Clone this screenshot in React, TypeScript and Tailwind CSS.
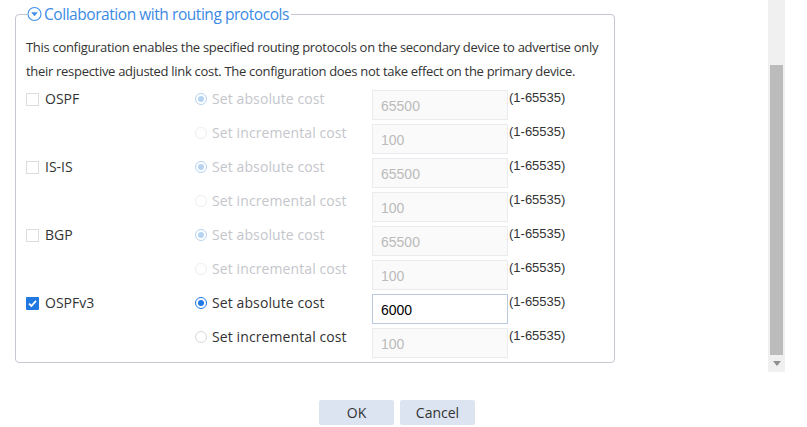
import React from "react";

const font = { fontFamily: '"Open Sans", "Noto Sans", Arial, sans-serif' };

function Radio({ checked, disabled }: { checked: boolean; disabled: boolean }) {
  if (checked) {
    const c = disabled ? "#b5d3f3" : "#1f7ae6";
    return (
      <span
        className="mt-[3px] mr-[5px] flex h-[12px] w-[12px] shrink-0 items-center justify-center rounded-full border bg-white"
        style={{ borderColor: c }}
      >
        <span className="h-[6px] w-[6px] rounded-full" style={{ background: c }} />
      </span>
    );
  }
  return (
    <span
      className={
        "mt-[3px] mr-[5px] h-[12px] w-[12px] shrink-0 rounded-full border bg-white " +
        (disabled ? "border-[#eeeeee]" : "border-[#d9d9d9]")
      }
    />
  );
}

function Checkbox({ checked }: { checked: boolean }) {
  if (checked) {
    return (
      <span className="mt-[3px] mr-[6px] flex h-[13px] w-[13px] shrink-0 items-center justify-center rounded-[1px] bg-[#2078e0]">
        <svg width="11" height="11" viewBox="0 0 11 11">
          <path d="M2 5.6 L4.4 8 L9 2.8" fill="none" stroke="#fff" strokeWidth="1.8" />
        </svg>
      </span>
    );
  }
  return <span className="mt-[3px] mr-[6px] h-[13px] w-[13px] shrink-0 border border-[#dcdcdc] bg-white" />;
}

function SubRow({
  first,
  label,
  checked,
  disabled,
  value,
  active,
  proto,
  protoChecked,
}: {
  first: boolean;
  label: string;
  checked: boolean;
  disabled: boolean;
  value: string;
  active: boolean;
  proto?: string;
  protoChecked?: boolean;
}) {
  return (
    <div className="flex h-[34px] items-start">
      <div className="flex w-[169px] items-start">
        {first && (
          <>
            <Checkbox checked={!!protoChecked} />
            <span className="text-[14px] leading-[18px] text-[#333]" style={font}>
              {proto}
            </span>
          </>
        )}
      </div>
      <div className="flex w-[177px] items-start">
        <Radio checked={checked} disabled={disabled} />
        <span
          className={
            "whitespace-nowrap text-[14px] leading-[18px] tracking-[0.1px] " +
            (disabled ? "text-[#c4c6cc]" : "text-[#333]")
          }
          style={font}
        >
          {label}
        </span>
      </div>
      <div
        className={
          "flex h-[30px] w-[136px] items-center border pl-[8px] text-[14px] " +
          (active
            ? "border-[#b9c9dd] bg-white text-black"
            : "border-[#ebebef] bg-[#fafafa] text-[#bbbbbb]")
        }
        style={{ fontFamily: '"Liberation Sans", Arial, sans-serif' }}
      >
        <span className="mt-[2px]">{value}</span>
      </div>
      <span
        className="ml-[1px] text-[13px] leading-[16px] text-[#333]"
        style={{ fontFamily: '"Liberation Sans", Arial, sans-serif' }}
      >
        (1-65535)
      </span>
    </div>
  );
}

const protos = [
  { name: "OSPF", checked: false, abs: "65500", inc: "100" },
  { name: "IS-IS", checked: false, abs: "65500", inc: "100" },
  { name: "BGP", checked: false, abs: "65500", inc: "100" },
  { name: "OSPFv3", checked: true, abs: "6000", inc: "100" },
];

export default function App() {
  return (
    <div className="relative h-[427px] w-[807px] overflow-hidden bg-white">
      <div className="flex">
        <div className="w-[768px] pt-[6px]">
          <fieldset className="ml-[15px] w-[600px] rounded-[4px] border border-[#c6c6d0] pl-[10px]">
            <legend className="ml-[1px] flex items-center pr-[2px]">
              <svg width="16" height="16" viewBox="0 0 16 16" className="mr-[1px]">
                <circle cx="7.5" cy="8" r="6.5" fill="none" stroke="#3e8fe8" strokeWidth="1.1" />
                <path d="M4.2 6.2 L10.8 6.2 L7.5 10.2 Z" fill="#3e8fe8" />
              </svg>
              <span
                className="whitespace-nowrap text-[15.5px] leading-[16px] tracking-[-0.45px] text-[#3a8ae4]"
                style={font}
              >
                Collaboration with routing protocols
              </span>
            </legend>
            <p
              className="mt-[13px] mb-[7px] whitespace-nowrap text-[13px] leading-[24px] tracking-[-0.3px] text-[#333]"
              style={font}
            >
              This configuration enables the specified routing protocols on the secondary device to advertise only
              <br />
              their respective adjusted link cost. The configuration does not take effect on the primary device.
            </p>
            <div>
              {protos.map((p) => (
                <React.Fragment key={p.name}>
                  <SubRow
                    first
                    proto={p.name}
                    protoChecked={p.checked}
                    label="Set absolute cost"
                    checked
                    disabled={!p.checked}
                    value={p.abs}
                    active={p.checked}
                  />
                  <SubRow
                    first={false}
                    label="Set incremental cost"
                    checked={false}
                    disabled={!p.checked}
                    value={p.inc}
                    active={false}
                  />
                </React.Fragment>
              ))}
            </div>
          </fieldset>
          <div className="mt-[37px] flex justify-center gap-[6px] pl-[26px]">
            <button className="h-[25px] w-[75px] rounded-[2px] bg-[#dde4f1] text-[14px] text-[#333]" style={font}>
              OK
            </button>
            <button className="h-[25px] w-[75px] rounded-[2px] bg-[#dde4f1] text-[14px] text-[#333]" style={font}>
              Cancel
            </button>
          </div>
        </div>
        <div className="flex h-[372px] w-[17px] flex-col bg-[#f0f0f0]">
          <div className="h-[65px]" />
          <div className="mx-[2px] h-[290px] bg-[#bcbcbc]" />
          <div className="flex flex-1 items-center justify-center">
            <svg width="8" height="5" viewBox="0 0 8 5">
              <path d="M0 0 L8 0 L4 5 Z" fill="#909090" />
            </svg>
          </div>
        </div>
      </div>
    </div>
  );
}
